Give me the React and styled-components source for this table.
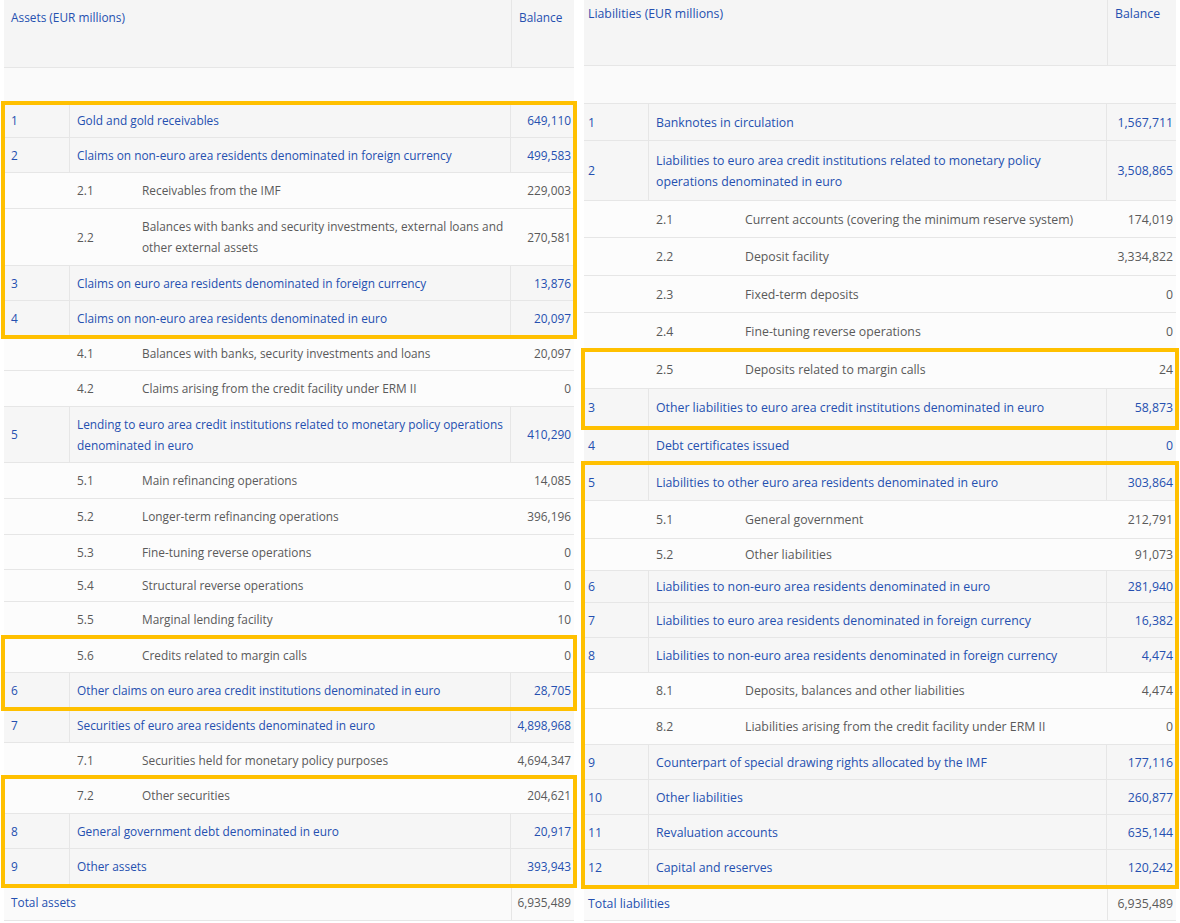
import styled, { createGlobalStyle } from "styled-components";

const BLUE = "#2550b0";
const GREY = "#5a5a5a";
const LINE = "#e6e6e6";
const AMBER = "#ffc000";

const GlobalStyle = createGlobalStyle`
  body {
    margin: 0;
    background: #ffffff;
    font-family: "Open Sans", "Noto Sans", sans-serif;
  }
`;

const Page = styled.div`
  display: flex;
  align-items: flex-start;
  gap: 10px;
  padding-left: 4px;
  width: 1180px;
`;

const Table = styled.div`
  width: ${(p) => p.$w}px;
  font-size: ${(p) => p.$fs}px;
  line-height: 21px;
`;

const HeadRow = styled.div`
  display: grid;
  grid-template-columns: 1fr ${(p) => p.$bal}px;
  height: ${(p) => p.$h}px;
  background: #f5f5f5;
  border-bottom: 1px solid ${LINE};
  box-sizing: border-box;
  color: ${BLUE};
`;

const HeadCell = styled.div`
  padding: ${(p) => p.$top}px 0 0 ${(p) => p.$pad}px;
  & + & {
    border-left: 1px solid ${LINE};
  }
`;

const BlankRow = styled.div`
  height: ${(p) => p.$h}px;
  background: #fafafa;
  border-bottom: 1px solid ${LINE};
  box-sizing: border-box;
`;

const Row = styled.div`
  display: grid;
  grid-template-columns: ${(p) =>
    p.$sub
      ? `${p.$num}px ${p.$subW}px 1fr ${p.$bal}px`
      : `${p.$num}px 1fr ${p.$bal}px`};
  align-items: stretch;
  height: ${(p) => p.$h}px;
  box-sizing: border-box;
  border-bottom: 1px solid ${LINE};
  background: ${(p) => (p.$sub ? "#fcfcfc" : "#f6f6f6")};
  color: ${(p) => (p.$sub ? GREY : BLUE)};
`;

const Cell = styled.div`
  display: flex;
  align-items: center;
  padding: 0 ${(p) => (p.$right ? 3 : 0)}px 0 ${(p) => p.$pad ?? 7}px;
  justify-content: ${(p) => (p.$right ? "flex-end" : "flex-start")};
  white-space: pre-line;
  border-right: ${(p) => (p.$line ? `1px solid ${LINE}` : "none")};
`;

const TotalRow = styled.div`
  display: grid;
  grid-template-columns: 1fr ${(p) => p.$bal}px;
  height: ${(p) => p.$h}px;
  box-sizing: border-box;
  border-bottom: 1px solid ${LINE};
  background: #fafafa;
  color: ${BLUE};
`;

const TotalValue = styled(Cell)`
  color: ${GREY};
  border-left: 1px solid ${LINE};
`;

const Highlight = styled.div`
  outline: 4px solid ${AMBER};
  outline-offset: -1px;
`;

const assets = [
  { g: true, rows: [
    { n: "1", t: "Gold and gold receivables", v: "649,110", h: 34 },
    { n: "2", t: "Claims on non-euro area residents denominated in foreign currency", v: "499,583" },
    { n: "2.1", t: "Receivables from the IMF", v: "229,003", s: true, h: 36 },
    { n: "2.2", t: "Balances with banks and security investments, external loans and\nother external assets", v: "270,581", s: true, h: 57 },
    { n: "3", t: "Claims on euro area residents denominated in foreign currency", v: "13,876" },
    { n: "4", t: "Claims on non-euro area residents denominated in euro", v: "20,097" },
  ] },
  { n: "4.1", t: "Balances with banks, security investments and loans", v: "20,097", s: true },
  { n: "4.2", t: "Claims arising from the credit facility under ERM II", v: "0", s: true, h: 36 },
  { n: "5", t: "Lending to euro area credit institutions related to monetary policy operations\ndenominated in euro", v: "410,290", h: 56 },
  { n: "5.1", t: "Main refinancing operations", v: "14,085", s: true, h: 36 },
  { n: "5.2", t: "Longer-term refinancing operations", v: "396,196", s: true, h: 36 },
  { n: "5.3", t: "Fine-tuning reverse operations", v: "0", s: true },
  { n: "5.4", t: "Structural reverse operations", v: "0", s: true, h: 32 },
  { n: "5.5", t: "Marginal lending facility", v: "10", s: true, h: 36 },
  { g: true, rows: [
    { n: "5.6", t: "Credits related to margin calls", v: "0", s: true },
    { n: "6", t: "Other claims on euro area credit institutions denominated in euro", v: "28,705" },
  ] },
  { n: "7", t: "Securities of euro area residents denominated in euro", v: "4,898,968" },
  { n: "7.1", t: "Securities held for monetary policy purposes", v: "4,694,347", s: true },
  { g: true, rows: [
    { n: "7.2", t: "Other securities", v: "204,621", s: true, h: 36 },
    { n: "8", t: "General government debt denominated in euro", v: "20,917" },
    { n: "9", t: "Other assets", v: "393,943", h: 36 },
  ] },
];

const liabilities = [
  { n: "1", t: "Banknotes in circulation", v: "1,567,711", h: 37 },
  { n: "2", t: "Liabilities to euro area credit institutions related to monetary policy\noperations denominated in euro", v: "3,508,865", h: 60 },
  { n: "2.1", t: "Current accounts (covering the minimum reserve system)", v: "174,019", s: true, h: 37 },
  { n: "2.2", t: "Deposit facility", v: "3,334,822", s: true, h: 38 },
  { n: "2.3", t: "Fixed-term deposits", v: "0", s: true, h: 37 },
  { n: "2.4", t: "Fine-tuning reverse operations", v: "0", s: true, h: 38 },
  { g: true, rows: [
    { n: "2.5", t: "Deposits related to margin calls", v: "24", s: true, h: 38 },
    { n: "3", t: "Other liabilities to euro area credit institutions denominated in euro", v: "58,873", h: 38 },
  ] },
  { n: "4", t: "Debt certificates issued", v: "0", h: 37 },
  { g: true, rows: [
    { n: "5", t: "Liabilities to other euro area residents denominated in euro", v: "303,864", h: 37 },
    { n: "5.1", t: "General government", v: "212,791", s: true, h: 38 },
    { n: "5.2", t: "Other liabilities", v: "91,073", s: true, h: 32 },
    { n: "6", t: "Liabilities to non-euro area residents denominated in euro", v: "281,940", h: 32 },
    { n: "7", t: "Liabilities to euro area residents denominated in foreign currency", v: "16,382" },
    { n: "8", t: "Liabilities to non-euro area residents denominated in foreign currency", v: "4,474" },
    { n: "8.1", t: "Deposits, balances and other liabilities", v: "4,474", s: true, h: 36 },
    { n: "8.2", t: "Liabilities arising from the credit facility under ERM II", v: "0", s: true, h: 36 },
    { n: "9", t: "Counterpart of special drawing rights allocated by the IMF", v: "177,116" },
    { n: "10", t: "Other liabilities", v: "260,877" },
    { n: "11", t: "Revaluation accounts", v: "635,144" },
    { n: "12", t: "Capital and reserves", v: "120,242", h: 36 },
  ] },
];

const Line = ({ r, cfg }) => (
  <Row
    $sub={r.s}
    $h={r.h || 35}
    $num={cfg.num}
    $subW={cfg.subW}
    $bal={cfg.bal}
  >
    {r.s ? (
      <>
        <Cell />
        <Cell>{r.n}</Cell>
        <Cell>{r.t}</Cell>
        <Cell $right>{r.v}</Cell>
      </>
    ) : (
      <>
        <Cell $pad={cfg.pad} $line>{r.n}</Cell>
        <Cell $line>{r.t}</Cell>
        <Cell $right>{r.v}</Cell>
      </>
    )}
  </Row>
);

const BalanceTable = ({ cfg, title, rows, total }) => (
  <Table $w={cfg.width} $fs={cfg.fs}>
    <HeadRow $h={cfg.headH} $bal={cfg.bal}>
      <HeadCell $top={cfg.headTop} $pad={cfg.pad}>{title}</HeadCell>
      <HeadCell $top={cfg.headTop} $pad={7}>Balance</HeadCell>
    </HeadRow>
    <BlankRow $h={cfg.blankH} />
    {rows.map((r, i) =>
      r.g ? (
        <Highlight key={i}>
          {r.rows.map((x) => (
            <Line key={x.n} r={x} cfg={cfg} />
          ))}
        </Highlight>
      ) : (
        <Line key={r.n} r={r} cfg={cfg} />
      )
    )}
    <TotalRow $h={cfg.totalH} $bal={cfg.bal}>
      <Cell $pad={cfg.pad}>{total.t}</Cell>
      <TotalValue $right>{total.v}</TotalValue>
    </TotalRow>
  </Table>
);

const left = { width: 570, fs: 11.85, num: 66, subW: 65, bal: 63, pad: 7, headH: 68, headTop: 7, blankH: 36, totalH: 36 };
const right = { width: 592, fs: 12.3, num: 65, subW: 89, bal: 69, pad: 4, headH: 66, headTop: 3, blankH: 38, totalH: 35 };

export default function App() {
  return (
    <>
      <GlobalStyle />
      <Page>
        <BalanceTable
          cfg={left}
          title="Assets (EUR millions)"
          rows={assets}
          total={{ t: "Total assets", v: "6,935,489" }}
        />
        <BalanceTable
          cfg={right}
          title="Liabilities (EUR millions)"
          rows={liabilities}
          total={{ t: "Total liabilities", v: "6,935,489" }}
        />
      </Page>
    </>
  );
}
